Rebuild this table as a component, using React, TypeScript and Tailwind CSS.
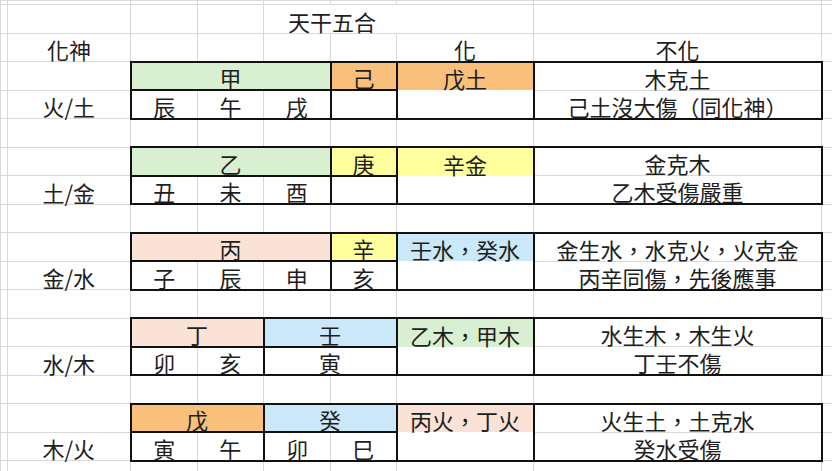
import React from "react";

type TopCell = { s: number; t: string; bg?: string; kind?: "f" | "g" };
type BottomCell = { s?: number; t: string; r?: boolean };
type Block = { label: string; top: TopCell[]; bottom: BottomCell[] };

const green = "bg-[#d9efd2]";
const orange = "bg-[#f8c07a]";
const yellow = "bg-[#ffff9e]";
const pink = "bg-[#fbe2d6]";
const blue = "bg-[#cbe8f8]";

const base = "border border-[#d9d9d9] p-0 pb-[1px] align-bottom text-center leading-none whitespace-nowrap";

const blocks: Block[] = [
  {
    label: "火/土",
    top: [
      { s: 3, t: "甲", bg: green },
      { s: 1, t: "己", bg: orange },
      { s: 1, t: "戊土", bg: orange, kind: "f" },
      { s: 1, t: "木克土", kind: "g" },
    ],
    bottom: [{ t: "辰" }, { t: "午" }, { t: "戌", r: true }, { t: "", r: true }, { t: "", r: true }, { t: "己土沒大傷（同化神）", r: true }],
  },
  {
    label: "土/金",
    top: [
      { s: 3, t: "乙", bg: green },
      { s: 1, t: "庚", bg: yellow },
      { s: 1, t: "辛金", bg: yellow, kind: "f" },
      { s: 1, t: "金克木", kind: "g" },
    ],
    bottom: [{ t: "丑" }, { t: "未" }, { t: "酉", r: true }, { t: "", r: true }, { t: "", r: true }, { t: "乙木受傷嚴重", r: true }],
  },
  {
    label: "金/水",
    top: [
      { s: 3, t: "丙", bg: pink },
      { s: 1, t: "辛", bg: yellow },
      { s: 1, t: "壬水，癸水", bg: blue, kind: "f" },
      { s: 1, t: "金生水，水克火，火克金", kind: "g" },
    ],
    bottom: [{ t: "子" }, { t: "辰" }, { t: "申", r: true }, { t: "亥", r: true }, { t: "", r: true }, { t: "丙辛同傷，先後應事", r: true }],
  },
  {
    label: "水/木",
    top: [
      { s: 2, t: "丁", bg: pink },
      { s: 2, t: "壬", bg: blue },
      { s: 1, t: "乙木，甲木", bg: green, kind: "f" },
      { s: 1, t: "水生木，木生火", kind: "g" },
    ],
    bottom: [{ t: "卯" }, { t: "亥", r: true }, { s: 2, t: "寅", r: true }, { t: "", r: true }, { t: "丁壬不傷", r: true }],
  },
  {
    label: "木/火",
    top: [
      { s: 2, t: "戊", bg: orange },
      { s: 2, t: "癸", bg: blue },
      { s: 1, t: "丙火，丁火", bg: pink, kind: "f" },
      { s: 1, t: "火生土，土克水", kind: "g" },
    ],
    bottom: [{ t: "寅" }, { t: "午", r: true }, { t: "卯" }, { t: "巳", r: true }, { t: "", r: true }, { t: "癸水受傷", r: true }],
  },
];

const Empty = () => (
  <tr className="h-[28.5px]">
    {Array.from({ length: 9 }).map((_, i) => (
      <td key={i} className={base}></td>
    ))}
  </tr>
);

const BlockRows: React.FC<{ b: Block }> = ({ b }) => (
  <>
    <tr className="h-[28.5px]">
      <td className={base}></td>
      <td className={base}></td>
      {b.top.map((c, i) => {
        let cls = "border-t-2 border-t-[#111] border-r-2 border-r-[#111]";
        if (i === 0) cls += " border-l-2 border-l-[#111]";
        if (c.kind === "f") cls += " [border-bottom-style:hidden]";
        else if (c.kind !== "g") cls += " border-b-2 border-b-[#111]";
        return (
          <td key={i} colSpan={c.s} className={`${base} ${c.bg ?? ""} ${cls}`}>
            {c.t}
          </td>
        );
      })}
      <td className={base}></td>
    </tr>
    <tr className="h-[28.5px]">
      <td className={base}></td>
      <td className={base}>{b.label}</td>
      {b.bottom.map((c, i) => {
        let cls = "border-b-2 border-b-[#111]";
        if (i === 0) cls += " border-l-2 border-l-[#111]";
        if (c.r) cls += " border-r-2 border-r-[#111]";
        return (
          <td key={i} colSpan={c.s ?? 1} className={`${base} ${cls}`}>
            {c.t}
          </td>
        );
      })}
      <td className={base}></td>
    </tr>
  </>
);

export default function App() {
  return (
    <div className="w-[832px] h-[471px] overflow-hidden bg-white text-[#1e1e1e] font-['Noto_Sans_CJK_TC','Noto_Sans_CJK_JP',sans-serif] text-[22px]">
      <table className="table-fixed border-collapse w-[832px]">
        <colgroup>
          <col className="w-[7px]" />
          <col className="w-[123px]" />
          <col className="w-[67px]" />
          <col className="w-[66px]" />
          <col className="w-[67px]" />
          <col className="w-[66px]" />
          <col className="w-[137px]" />
          <col className="w-[288px]" />
          <col className="w-[11px]" />
        </colgroup>
        <tbody>
          <tr className="h-[4px]">
            {Array.from({ length: 9 }).map((_, i) => (
              <td key={i} className="border border-[#d9d9d9] p-0"></td>
            ))}
          </tr>
          <tr className="h-[28.5px]">
            <td className={base}></td>
            <td className={base}></td>
            <td className={base}></td>
            <td className={base}></td>
            <td colSpan={3} className={`${base} text-left pl-[24px]`}>天干五合</td>
            <td className={base}></td>
            <td className={base}></td>
          </tr>
          <tr className="h-[28.5px]">
            <td className={base}></td>
            <td className={base}>化神</td>
            <td className={base}></td>
            <td className={base}></td>
            <td className={base}></td>
            <td className={base}></td>
            <td className={base}>化</td>
            <td className={base}>不化</td>
            <td className={base}></td>
          </tr>
          {blocks.map((b, i) => (
            <React.Fragment key={i}>
              <BlockRows b={b} />
              {i < blocks.length - 1 && <Empty />}
            </React.Fragment>
          ))}
          <tr className="h-[11px]">
            {Array.from({ length: 9 }).map((_, i) => (
              <td key={i} className="border border-[#d9d9d9] p-0"></td>
            ))}
          </tr>
        </tbody>
      </table>
    </div>
  );
}
